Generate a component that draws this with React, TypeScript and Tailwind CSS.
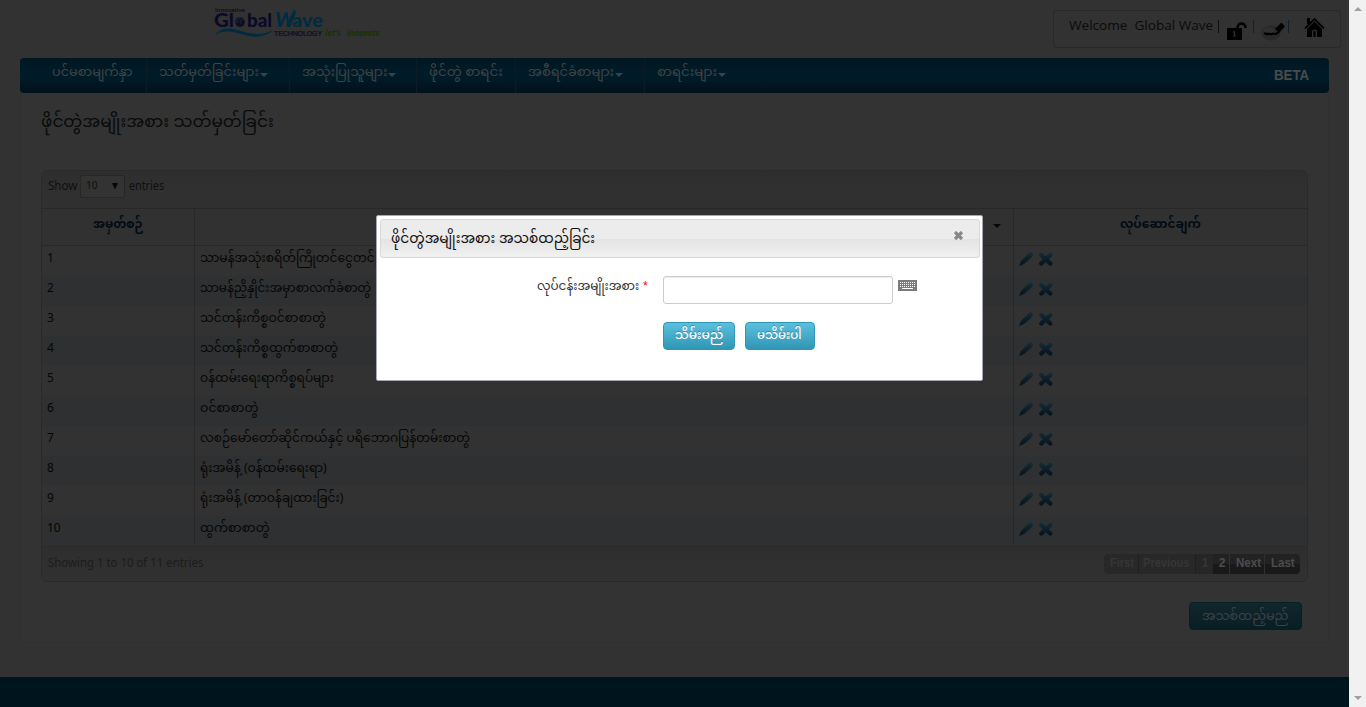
import React from "react";

const NAV = [
  { label: "ပင်မစာမျက်နှာ", caret: false, box: "w-[127px] pl-[32px]", text: "w-[81px]" },
  { label: "သတ်မှတ်ခြင်းများ", caret: true, box: "w-[143px] pl-[12px]", text: "w-[100px]" },
  { label: "အသုံးပြုသူများ", caret: true, box: "w-[127px] pl-[12px]", text: "w-[85px]" },
  { label: "ဖိုင်တွဲ စာရင်း", caret: false, box: "w-[99px] pl-[12px]", text: "w-[74px]" },
  { label: "အစီရင်ခံစာများ", caret: true, box: "w-[129px] pl-[12px]", text: "w-[86px]" },
  { label: "စာရင်းများ", caret: true, box: "w-[120px] pl-[12px]", text: "w-[60px]" },
];

const ROWS = [
  { label: "သာမန်အသုံးစရိတ်ကြိုတင်ငွေတင်ပြစာတွဲ", width: "w-[213px]" },
  { label: "သာမန်ညှိနှိုင်းအမှာစာလက်ခံစာတွဲ", width: "w-[171px]" },
  { label: "သင်တန်းကိစ္စဝင်စာစာတွဲ", width: "w-[126px]" },
  { label: "သင်တန်းကိစ္စထွက်စာစာတွဲ", width: "w-[138px]" },
  { label: "ဝန်ထမ်းရေးရာကိစ္စရပ်များ", width: "w-[134px]" },
  { label: "ဝင်စာစာတွဲ", width: "w-[58px]" },
  { label: "လစဉ်မော်တော်ဆိုင်ကယ်နှင့် ပရိဘောဂပြန်တမ်းစာတွဲ", width: "w-[270px]" },
  { label: "ရုံးအမိန့် (ဝန်ထမ်းရေးရာ)", width: "w-[127px]" },
  { label: "ရုံးအမိန့် (တာဝန်ချထားခြင်း)", width: "w-[143px]" },
  { label: "ထွက်စာစာတွဲ", width: "w-[70px]" },
];

/** Single line of text fitted to the width of its box. */
function Fit({ children, className }: { children: string; className: string }) {
  const ref = React.useRef<HTMLSpanElement>(null);
  const [scale, setScale] = React.useState(1);
  React.useLayoutEffect(() => {
    const el = ref.current;
    if (el && el.parentElement && el.offsetWidth) setScale(el.parentElement.clientWidth / el.offsetWidth);
  }, []);
  return (
    <span className={"block shrink-0 whitespace-nowrap " + className}>
      <span ref={ref} className="inline-block origin-left" style={{ transform: `scaleX(${scale})` }}>
        {children}
      </span>
    </span>
  );
}

function Logo() {
  return (
    <svg width="170" height="34" viewBox="0 0 170 34" className="mt-[6px] ml-[213px] block shrink-0">
      <text x="2" y="5.500" fontFamily="'Open Sans', sans-serif" fontSize="6" fontWeight="600" fill="#090920" textLength="30">Innovative</text>
      <g fontFamily="Lato, sans-serif" fontWeight="900" fontSize="18">
        <text x="1" y="20.500" fill="#0b0a26" textLength="20" lengthAdjust="spacingAndGlyphs">Gl</text>
        <text x="34" y="20.500" fill="#0b0a26" textLength="25" lengthAdjust="spacingAndGlyphs">bal</text>
        <text x="62" y="20.500" fill="#002c40" fontStyle="italic" fontSize="20" textLength="20" lengthAdjust="spacingAndGlyphs">W</text>
        <text x="79" y="20.500" fill="#002c40" textLength="31" lengthAdjust="spacingAndGlyphs">ave</text>
      </g>
      <path d="M74 20c3-5 5-12 8-16" fill="none" stroke="#002c40" strokeWidth="2" />
      <text x="61" y="30" fontFamily="'Liberation Sans', sans-serif" fontSize="6.500" fill="#0b0a26" stroke="#0b0a26" strokeWidth="0.200" textLength="48" lengthAdjust="spacingAndGlyphs">TECHNOLOGY</text>
      <circle cx="27" cy="16" r="4.800" fill="#0b0d26" />
      <path d="M28 12c-3 0-5 2-4 5M30.500 13.500c-3 0-4 2-3 4" fill="none" stroke="#243038" />
      <path d="M2 29c7-9 17-7 26-4 13 4 23 4 32-1-8 8-20 8-32 4-10-3-18-4-26 1z" fill="#002c40" />
      <text x="112" y="30" fontFamily="'Open Sans', sans-serif" fontStyle="italic" fontWeight="700" fontSize="8.500" fill="#163300" textLength="16" lengthAdjust="spacingAndGlyphs">let’s</text>
      <text x="134" y="30" fontFamily="'Open Sans', sans-serif" fontStyle="italic" fontWeight="700" fontSize="8.500" fill="#163300" textLength="33" lengthAdjust="spacingAndGlyphs">innovate</text>
    </svg>
  );
}

function HeaderTools() {
  return (
    <div className="mt-[10px] mr-[8px] flex h-[38px] w-[288px] rounded-[3px] border border-[#292929] bg-[#323232]">
      <div className="ml-[15px] w-[146px] shrink-0 pt-[4px] font-['Open_Sans',sans-serif] text-[13px] leading-[20px] whitespace-pre text-[#0b0b0b]">
        <Fit className="w-[144px]">{"Welcome\u00a0 Global Wave"}</Fit>
      </div>
      <svg width="115" height="36" viewBox="0 0 115 36" className="block shrink-0">
        <path d="M3.500 9v13" stroke="#160c18" />
        <path d="M38.500 9v13M73.500 9v13" stroke="#14202c" />
        <rect x="12" y="17" width="15" height="12" rx="1" fill="#000" />
        <path d="M22.500 18v-1c0-6 8-6 8 0" fill="none" stroke="#000" strokeWidth="2.400" />
        <path d="M19.500 20v5M18 21h2M18 25h3" stroke="#303030" strokeWidth="1.200" />
        <ellipse cx="56" cy="22" rx="9.500" ry="7.500" fill="#282828" />
        <ellipse cx="54" cy="20" rx="6" ry="4" fill="#2f2f2f" />
        <path d="M49 22.500h2l1 .8 2-.8 2 .8 2-.8 3 .5 4-3" fill="none" stroke="#000" strokeWidth="2" />
        <path d="M61 18l5.500-5.500 2.500 3-5 5z" fill="#000" stroke="#000" strokeWidth="1.500" strokeLinejoin="round" />
        <path d="M90 17.500l9.500-9.500 9.500 9.500" fill="none" stroke="#000" strokeWidth="1.800" />
        <path d="M92 18l7.500-7.500 7.500 7.500v8h-5v-5a2.500 2.500 0 0 0-5 0v5h-5z" fill="#000" />
        <rect x="92" y="7" width="3" height="6" fill="#000" />
        <path d="M98.300 26v-5a1.200 1.200 0 0 1 2.400 0v5z" fill="#000" />
      </svg>
    </div>
  );
}

function Caret({ className }: { className: string }) {
  return (
    <svg width="8" height="4" viewBox="0 0 8 4" className={"block shrink-0 " + className}>
      <path d="M0 0h8L4 4z" fill="currentColor" />
    </svg>
  );
}

function RowIcons() {
  return (
    <svg width="36" height="16" viewBox="0 0 36 16" className="block">
      <defs>
        <linearGradient id="ink" gradientUnits="userSpaceOnUse" x1="0" y1="1" x2="0" y2="15">
          <stop offset="0" stopColor="#152d39" />
          <stop offset="1" stopColor="#05111a" />
        </linearGradient>
      </defs>
      <path d="M0 15l2-5 8-8 2-1 2 3-2 3-7 6z" fill="url(#ink)" />
      <path d="M22.300 4l9 8.500M31.300 4l-9 8.500" stroke="url(#ink)" strokeWidth="4.400" strokeLinecap="round" fill="none" />
    </svg>
  );
}

function Pager() {
  return (
    <div className="mr-[7px] flex h-[20px] overflow-hidden rounded-[4px] font-['Liberation_Sans',sans-serif] text-[12px] leading-[19px] font-bold text-[#4c4c4c]">
      <div className="flex w-[35px] justify-end border-r border-[#1e1e1e] bg-[#282828] pr-[4px] text-[#363636]">
        <Fit className="w-[24px]">First</Fit>
      </div>
      <div className="flex w-[57px] justify-end border-r border-[#1e1e1e] bg-[#282828] pr-[5px] text-[#363636]">
        <Fit className="w-[47px]">Previous</Fit>
      </div>
      <div className="w-[17px] bg-[#262626] pl-[1px] text-center text-[#363636]">1</div>
      <div className="w-[17px] border-r border-[#303030] bg-linear-to-b from-[#222] from-50% to-[#191919] to-50% pl-[2px] text-center">2</div>
      <div className="flex w-[35px] justify-end border-r border-[#303030] bg-linear-to-b from-[#222] from-50% to-[#191919] to-50% pr-[3px]">
        <Fit className="w-[25px]">Next</Fit>
      </div>
      <div className="flex w-[35px] justify-end bg-linear-to-b from-[#222] from-50% to-[#191919] to-50% pr-[5px]">
        <Fit className="w-[24px]">Last</Fit>
      </div>
    </div>
  );
}

function Table() {
  return (
    <div className="ml-[20px] h-[412px] w-[1267px] overflow-hidden rounded-[6px] border border-[#2a2a2a] text-[12px] text-[#060606]">
      <div className="flex h-[37px] bg-linear-to-b from-[#2e2e2e] to-[#313131] pt-[4px] pl-[6px] text-[#101010]">
        <Fit className="mt-[2px] w-[29px] leading-[20px]">Show</Fit>
        <div className="ml-[3px] flex h-[23px] w-[45px] rounded-[2px] border border-[#272727] bg-[#333] pl-[5px] leading-[20px]">
          <Fit className="w-[12px] text-[11px]">10</Fit>
          <svg width="6" height="7" viewBox="0 0 6 7" className="mt-[7px] ml-[14px] block">
            <path d="M0 0h6L3 6.500z" fill="#060606" />
          </svg>
        </div>
        <Fit className="mt-[2px] ml-[4px] w-[35px] leading-[20px]">entries</Fit>
      </div>
      <div className="flex h-[38px] border-y border-[#282828] bg-[#313131] text-[12px] leading-[20px] font-bold text-[#010b14]">
        <div className="flex w-[153px] justify-center border-r border-[#282828] pt-[6px]">
          <Fit className="w-[50px]">အမှတ်စဉ်</Fit>
        </div>
        <div className="flex w-[819px] justify-end border-r border-[#282828] pt-[15px] pr-[12px]">
          <Caret className="text-[#060606]" />
        </div>
        <div className="flex w-[293px] justify-center pt-[6px]">
          <Fit className="w-[81px]">လုပ်ဆောင်ချက်</Fit>
        </div>
      </div>
      {ROWS.map((row, i) => (
        <div key={row.label} className={"flex h-[30px] leading-[20px] " + (i % 2 ? "bg-[#2e3031]" : "bg-[#323232]")}>
          <div className="w-[153px] border-r border-[#282828] pt-[3px] pl-[5px]">
            <Fit className={i === 9 ? "w-[14px]" : "w-[7px]"}>{String(i + 1)}</Fit>
          </div>
          <div className="w-[819px] border-r border-[#282828] pt-[3px] pl-[5px]">
            <Fit className={row.width}>{row.label}</Fit>
          </div>
          <div className="w-[293px] pt-[5px] pl-[5px]">
            <RowIcons />
          </div>
        </div>
      ))}
      <div className="flex h-[35px] items-center justify-between border-t border-[#2a2a2a] bg-linear-to-b from-[#2e2e2e] to-[#313131] pl-[6px]">
        <Fit className="w-[155px] text-[#1c1c1c]">Showing 1 to 10 of 11 entries</Fit>
        <Pager />
      </div>
    </div>
  );
}

function Dialog() {
  return (
    <div className="absolute top-[215px] left-[376px] h-[166px] w-[607px] rounded-[2px] border border-[#a6a6b4] bg-white py-[3px] pr-[2px] pl-[3px] text-[#111]">
      <div className="flex h-[39px] justify-between rounded-[3px] border border-[#d8d8d8] bg-linear-to-b from-[#ececec] from-50% via-[#e3e3e3] via-50% to-[#f1f1f1] pt-[8px] pr-[15px] pl-[10px] text-[14px] leading-[24px]">
        <Fit className="w-[204px]">ဖိုင်တွဲအမျိုးအစား အသစ်ထည့်ခြင်း</Fit>
        <svg width="11" height="10" viewBox="0 0 11 10" className="mt-[3px] block">
          <path d="M2 1l7 7M9 1l-7 7" stroke="#888" strokeWidth="3.200" />
        </svg>
      </div>
      <div className="mt-[18px] flex pl-[157px]">
        <div className="flex h-[28px] w-[126px] pt-px text-[12px] leading-[20px] text-[#333]">
          <Fit className="w-[102px]">လုပ်ငန်းအမျိုးအစား</Fit>
          <span className="ml-[4px] font-['Liberation_Sans',sans-serif] text-[12px] leading-[19px] text-[#f00]">*</span>
        </div>
        <input aria-label="လုပ်ငန်းအမျိုးအစား" className="block h-[28px] w-[230px] rounded-[3px] border border-[#ccc] bg-white px-2 shadow-[inset_0_1px_1px_rgba(0,0,0,0.075)]" />
        <svg width="19" height="11" viewBox="0 0 19 11" className="mt-[4px] ml-[5px] block">
          <path d="M0 0h19v11H0z" fill="#7b7b7b" />
          <path d="M2 2.500h15M2 4.500h15M2 6.500h15" stroke="#fff" strokeDasharray="1 1" />
          <path d="M4 8.500h11" stroke="#fff" />
        </svg>
      </div>
      <div className="mt-[18px] ml-[283px] flex gap-[10px] text-[13px] leading-[20px] font-medium text-white">
        <button className="flex h-[28px] w-[72px] justify-center rounded-[4px] border border-[#2f96b4] bg-linear-to-b from-[#5bc0de] to-[#2f96b4] pt-[3px] pr-px text-shadow-[0_-1px_0_rgba(0,0,0,0.25)]">
          <Fit className="w-[48px]">သိမ်းမည်</Fit>
        </button>
        <button className="flex h-[28px] w-[70px] justify-center rounded-[4px] border border-[#2f96b4] bg-linear-to-b from-[#5bc0de] to-[#2f96b4] pt-[3px] pr-px text-shadow-[0_-1px_0_rgba(0,0,0,0.25)]">
          <Fit className="w-[45px]">မသိမ်းပါ</Fit>
        </button>
      </div>
    </div>
  );
}

export default function App() {
  return (
    <div className="relative flex h-[707px] w-[1366px] overflow-hidden bg-[#f1f1f1] font-['Noto_Sans_Myanmar','Padauk','Myanmar_Text','Open_Sans',sans-serif]">
      <div className="flex w-[1349px] flex-col bg-[#323232] bg-[radial-gradient(#2e2e2e_0.6px,transparent_0.7px)] bg-[length:4px_4px]">
        <header className="flex h-[58px] shrink-0 items-start justify-between">
          <Logo />
          <HeaderTools />
        </header>
        <nav className="mx-[20px] flex h-[35px] shrink-0 rounded-[4px] bg-linear-to-b from-[#001722] via-[#001c29] via-50% to-[#00121b] text-[13px] leading-[20px] text-[#404445]">
          {NAV.map((item, i) => (
            <div key={item.label} className={"flex pt-[5px] " + (i < NAV.length - 1 ? "border-r border-[#0c1c22] " : "") + item.box}>
              <Fit className={item.text}>{item.label}</Fit>
              {item.caret && <Caret className="mt-[10px] ml-[1px] text-[#3b4145]" />}
            </div>
          ))}
          <div className="mr-[20px] ml-auto flex pt-[7px] font-['Liberation_Sans',sans-serif] text-[14px] font-bold text-[#4b4b4b]">
            <Fit className="w-[35px]">BETA</Fit>
          </div>
        </nav>
        <main className="mx-[20px] h-[550px] shrink-0 border border-t-0 border-[#303030] bg-[#333]">
          <h1 className="flex h-[77px] pt-[14px] pl-[20px] text-[17px] leading-[32px] text-[#0a0a0a]">
            <Fit className="w-[233px]">ဖိုင်တွဲအမျိုးအစား သတ်မှတ်ခြင်း</Fit>
          </h1>
          <Table />
          <div className="mt-[20px] mr-[26px] flex justify-end">
            <button className="flex h-[28px] w-[113px] justify-center rounded-[4px] border border-[#081e26] bg-linear-to-b from-[#12272d] to-[#091e24] pt-[4px] pr-px text-[13px] leading-[20px] text-[#3b4346]">
              <Fit className="w-[87px]">အသစ်ထည့်မည်</Fit>
            </button>
          </div>
        </main>
        <footer className="mt-auto h-[30px] shrink-0 bg-[#00141e]" />
      </div>
      <aside className="flex w-[17px] flex-col items-center justify-between pt-[7px] pb-[7px]">
        <Caret className="rotate-180 text-[#a0a0a0]" />
        <Caret className="text-[#a0a0a0]" />
      </aside>
      <Dialog />
    </div>
  );
}
